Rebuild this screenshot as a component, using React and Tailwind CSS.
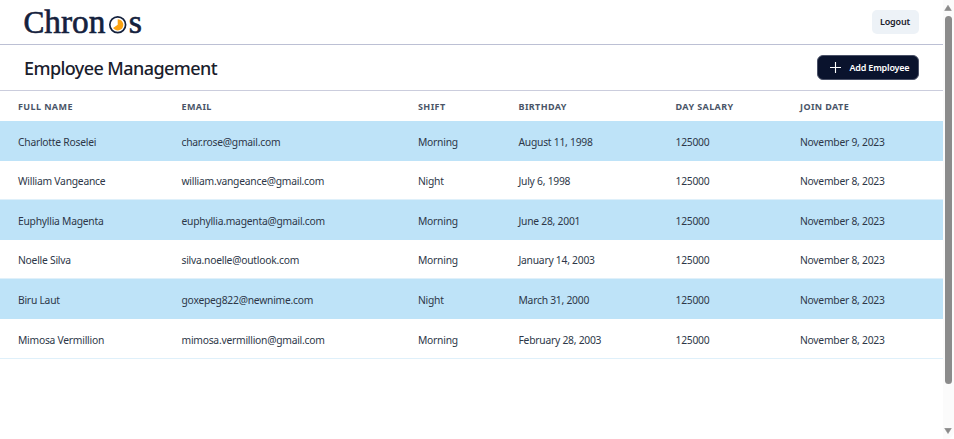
const columns = ["Full Name", "Email", "Shift", "Birthday", "Day Salary", "Join Date"];

const employees = [
  ["Charlotte Roselei", "char.rose@gmail.com", "Morning", "August 11, 1998", "125000", "November 9, 2023"],
  ["William Vangeance", "william.vangeance@gmail.com", "Night", "July 6, 1998", "125000", "November 8, 2023"],
  ["Euphyllia Magenta", "euphyllia.magenta@gmail.com", "Morning", "June 28, 2001", "125000", "November 8, 2023"],
  ["Noelle Silva", "silva.noelle@outlook.com", "Morning", "January 14, 2003", "125000", "November 8, 2023"],
  ["Biru Laut", "goxepeg822@newnime.com", "Night", "March 31, 2000", "125000", "November 8, 2023"],
  ["Mimosa Vermillion", "mimosa.vermillion@gmail.com", "Morning", "February 28, 2003", "125000", "November 8, 2023"],
];

const rowGrid = "grid grid-cols-[163.5px_236.5px_100.5px_157px_124.5px_1fr] items-center pl-[18px]";

function Logo() {
  return (
    <svg width="124" height="40" viewBox="0 0 124 40" className="-ml-0.5" role="img" aria-label="Chronos">
      <g
        fill="#14213d"
        stroke="#14213d"
        strokeWidth="0.6"
        fontFamily="'Liberation Serif', serif"
      >
        <text x="1.4" y="30.6" fontSize="33" textLength="82" lengthAdjust="spacingAndGlyphs">
          <tspan fontSize="31">C</tspan>hron
        </text>
        <text x="106.8" y="30.6" fontSize="33" textLength="13.2" lengthAdjust="spacingAndGlyphs">s</text>
      </g>
      <circle cx="95.7" cy="22.8" r="7.9" fill="#fff" stroke="#14213d" strokeWidth="1.7" />
      <path d="M95.7 22.8V17.2A5.6 5.6 0 1 1 91.1 26Z" fill="#fca311" />
    </svg>
  );
}

function Scrollbar() {
  return (
    <div className="flex w-[11.5px] shrink-0 flex-col items-center bg-[#fbfbfb] pt-[5px] pb-[5px]">
      <svg width="8" height="6" viewBox="0 0 8 6" className="shrink-0">
        <path d="M4 0.3L7.3 5.5H0.7Z" fill="#8a8a8a" stroke="#8a8a8a" strokeWidth="0.6" strokeLinejoin="round" />
      </svg>
      <div className="mt-[5px] h-[368px] w-[7px] shrink-0 rounded-full bg-[#8b8b8b]" />
      <svg width="8" height="6" viewBox="0 0 8 6" className="mt-auto shrink-0">
        <path d="M4 5.5L7.3 0.3H0.7Z" fill="#8a8a8a" stroke="#8a8a8a" strokeWidth="0.6" strokeLinejoin="round" />
      </svg>
    </div>
  );
}

export default function App() {
  return (
    <div className="flex h-[439px] w-[954px] overflow-hidden rounded-b-lg bg-white font-['Noto_Sans',sans-serif] text-[#2d3748]">
      <main className="min-w-0 flex-1">
        <header className="flex h-[45px] items-center justify-between border-b border-[#bcc0d4] pr-6 pl-6">
          <Logo />
          <button className="h-6 w-[47px] rounded-[5px] bg-[#edf2f7] text-[9px] font-semibold tracking-[-0.15px] text-[#1a202c]">
            Logout
          </button>
        </header>
        <section className="flex h-[46px] items-center justify-between border-b border-[#cbcddd] px-6">
          <h1 className="pt-px text-[18px] font-medium tracking-[-0.58px] whitespace-nowrap text-[#1a202c]">
            Employee Management
          </h1>
          <button className="flex h-[25px] w-[102px] items-center rounded-[6px] border border-[#4a5167] bg-[#0a132d] pl-3 text-[9px] font-semibold tracking-[-0.2px] whitespace-nowrap text-white">
            <svg width="11" height="11" viewBox="0 0 11 11" className="mr-[9px] shrink-0">
              <path d="M5.5 0V11M0 5.5H11" stroke="#fff" strokeWidth="1.1" />
            </svg>
            Add Employee
          </button>
        </section>
        <div>
          <div className={`${rowGrid} h-[30px] pt-0.5 text-[9px] font-bold tracking-[0.4px] text-[#4a5568] uppercase`}>
            {columns.map((name) => (
              <div key={name}>{name}</div>
            ))}
          </div>
          {employees.map((cells) => (
            <div
              key={cells[0]}
              className={`${rowGrid} h-[39.6px] border-b border-[#dff0fa] pt-[4px] text-[10.3px] tracking-[-0.24px] whitespace-nowrap odd:bg-white even:border-[#bee3f8] even:bg-[#bee3f8]`}
            >
              {cells.map((value, i) => (
                <div key={i}>{value}</div>
              ))}
            </div>
          ))}
        </div>
      </main>
      <Scrollbar />
    </div>
  );
}
